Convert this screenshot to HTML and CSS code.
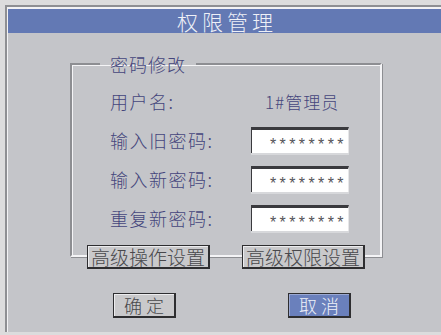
FILE: index.html
```html
<!DOCTYPE html>
<html lang="zh-CN">
<head>
    <meta charset="UTF-8">
    <title>权限管理</title>
    <link rel="stylesheet" href="styles.css">
</head>
<body>
    <div class="screen">
        <div class="panel">
            <!-- Title bar -->
            <div class="title-bar">权限管理</div>

            <!-- Password group -->
            <fieldset class="group">
                <legend>密码修改</legend>
                <div class="row">
                    <span class="label">用户名:</span>
                    <span class="value">1#管理员</span>
                </div>
                <div class="row">
                    <span class="label">输入旧密码:</span>
                    <span class="field">********</span>
                </div>
                <div class="row">
                    <span class="label">输入新密码:</span>
                    <span class="field">********</span>
                </div>
                <div class="row">
                    <span class="label">重复新密码:</span>
                    <span class="field">********</span>
                </div>
            </fieldset>

            <!-- Buttons sitting on the group border -->
            <div class="group-buttons">
                <button class="btn btn-wide">高级操作设置</button>
                <button class="btn btn-wide">高级权限设置</button>
            </div>

            <!-- Dialog buttons -->
            <div class="dialog-buttons">
                <button class="btn btn-small">确定</button>
                <button class="btn btn-small btn-blue">取消</button>
            </div>
        </div>
    </div>
</body>
</html>
```

FILE: styles.css
```css
/* Page */
body {
    margin: 0;
    background-color: #dcdcdd;
    font-family: "Noto Sans CJK SC", "Liberation Serif", serif;
}

.screen {
    width: 441px;
    height: 335px;
    padding: 5px 0 0 5px;
    box-sizing: border-box;
    overflow: hidden;
}

/* Main panel with sunken frame */
.panel {
    height: 327px;
    background-color: #c4c5c9;
    border-top: 2px solid #8e8f93;
    border-left: 2px solid #8e8f93;
    box-shadow: inset 1px 2px 0 #f2f2f4;
    padding: 2px 0 0 1px;
    box-sizing: border-box;
}

/* Title */
.title-bar {
    height: 24px;
    line-height: 24px;
    background-color: #6379b4;
    color: #eef0f7;
    text-align: center;
    font-size: 21px;
    font-weight: 300;
    letter-spacing: 4px;
    padding-left: 5px;
}

/* Group box */
.group {
    margin: 20px 0 0 62px;
    width: 312px;
    box-sizing: border-box;
    border: 2px solid;
    border-color: #8d8e92 #f4f4f6 #f4f4f6 #8d8e92;
    box-shadow: 1px 1px 0 #8d8e92, inset 1px 1px 0 #f4f4f6;
    padding: 13px 0 24px 38px;
    min-width: 0;
}

.group legend {
    margin-left: -10px;
    padding: 0 10px;
    font-size: 18px;
    line-height: 22px;
    letter-spacing: 1px;
    color: #45457c;
    font-weight: 300;
}

.row {
    display: flex;
    align-items: center;
    height: 26px;
    margin-bottom: 13px;
}

.row:last-child {
    margin-bottom: 0;
}

.label {
    width: 141px;
    font-size: 18px;
    font-weight: 300;
    letter-spacing: 1.5px;
    color: #45457c;
}

.value {
    padding-left: 14px;
    font-size: 17px;
    font-weight: 300;
    letter-spacing: 1px;
    color: #45457c;
}

/* Password input */
.field {
    width: 98px;
    height: 26px;
    box-sizing: border-box;
    background-color: #ffffff;
    border-top: 3px solid #3a3a3e;
    border-left: 1px solid #3a3a3e;
    border-right: 1px solid #e6e6e8;
    box-shadow: 0 2px 0 #d7d8db;
    text-align: right;
    padding-right: 1px;
    font-family: "Liberation Sans", sans-serif;
    font-size: 16px;
    line-height: 30px;
    letter-spacing: 3.4px;
    color: #55555a;
}

/* Buttons */
.btn {
    box-sizing: border-box;
    font-family: inherit;
    font-weight: 300;
    color: #48484c;
    background-color: #c9c9cb;
    border: 1px solid #2e2e30;
    border-right-width: 2px;
    border-bottom-width: 2px;
    box-shadow: inset 1px 1px 0 #ececee;
    padding: 0;
    cursor: pointer;
}

.group-buttons {
    display: flex;
    gap: 32px;
    margin: -12px 0 0 79px;
}

.btn-wide {
    width: 123px;
    height: 24px;
    font-size: 19px;
    line-height: 20px;
}

.dialog-buttons {
    display: flex;
    gap: 112px;
    margin: 24px 0 0 105px;
}

.btn-small {
    width: 63px;
    height: 25px;
    font-size: 18px;
    line-height: 21px;
    letter-spacing: 4px;
    padding-left: 4px;
}

.btn-blue {
    background-color: #6a80bc;
    color: #eef0f8;
    box-shadow: inset 1px 1px 0 #9aa8d2;
}
```
